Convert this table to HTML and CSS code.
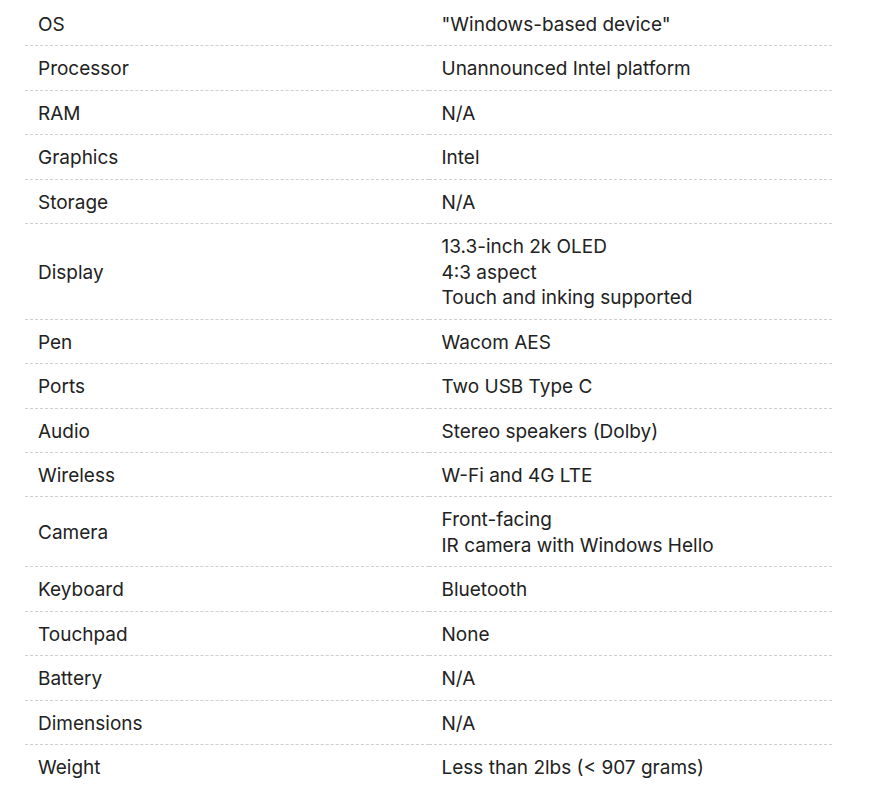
FILE: index.html
```html
<!DOCTYPE html>
<html>
<head>
<meta charset="utf-8">
<link rel="stylesheet" href="styles.css">
</head>
<body>
<table class="specs">
<tbody>
<tr><td>OS</td><td>"Windows-based device"</td></tr>
<tr><td>Processor</td><td>Unannounced Intel platform</td></tr>
<tr><td>RAM</td><td>N/A</td></tr>
<tr><td>Graphics</td><td>Intel</td></tr>
<tr><td>Storage</td><td>N/A</td></tr>
<tr><td>Display</td><td>13.3-inch 2k OLED<br>4:3 aspect<br>Touch and inking supported</td></tr>
<tr><td>Pen</td><td>Wacom AES</td></tr>
<tr><td>Ports</td><td>Two USB Type C</td></tr>
<tr><td>Audio</td><td>Stereo speakers (Dolby)</td></tr>
<tr><td>Wireless</td><td>W-Fi and 4G LTE</td></tr>
<tr><td>Camera</td><td>Front-facing<br>IR camera with Windows Hello</td></tr>
<tr><td>Keyboard</td><td>Bluetooth</td></tr>
<tr><td>Touchpad</td><td>None</td></tr>
<tr><td>Battery</td><td>N/A</td></tr>
<tr><td>Dimensions</td><td>N/A</td></tr>
<tr class="last"><td>Weight</td><td>Less than 2lbs (&lt; 907 grams)</td></tr>
</tbody>
</table>
</body>
</html>
```
FILE: styles.css
```css
html, body {
  margin: 0;
  padding: 0;
  background: #fff;
}
body {
  padding: 2px 41px 0 25px;
  font-family: Inter, "Liberation Sans", Arial, sans-serif;
  color: #222;
}
.specs {
  width: 807px;
  border-collapse: collapse;
  table-layout: fixed;
}
.specs td {
  width: 50%;
  padding: 10px 13px 8px;
  font-size: 19px;
  line-height: 25.45px;
  vertical-align: middle;
  border-bottom: 1px dashed #cfcfcf;
}
.specs tr.last td {
  border-bottom: none;
}
```
